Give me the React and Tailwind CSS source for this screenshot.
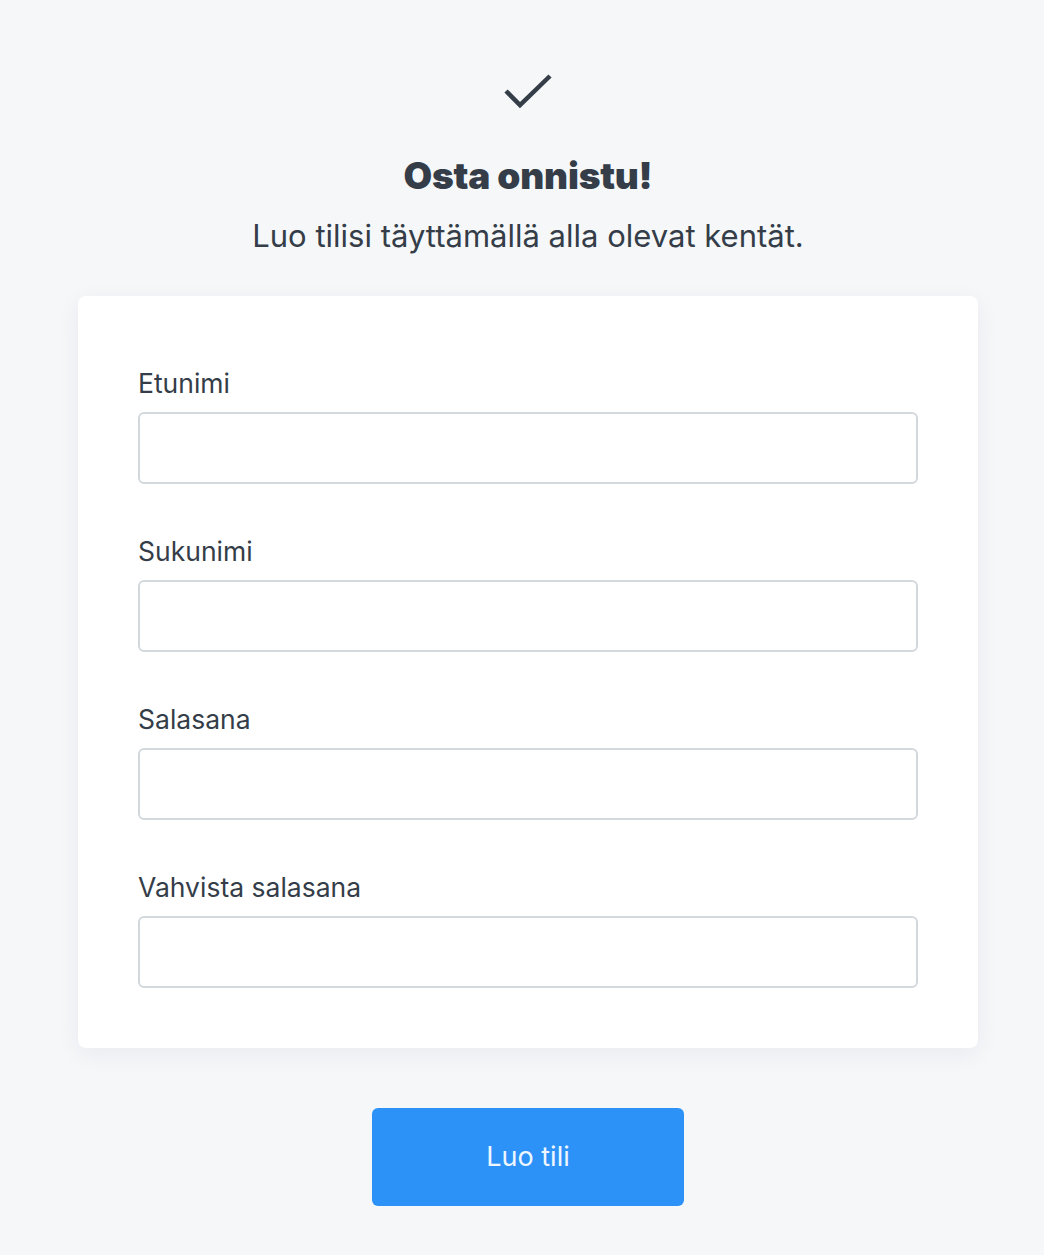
import React from 'react';

const FIELDS = ['Etunimi', 'Sukunimi', 'Salasana', 'Vahvista salasana'];

const App = () => {
    return (
        <div className="min-h-[1255px] w-full bg-[#f5f7f9] flex flex-col items-center pt-[72px] pl-3 text-[#343d48]" style={{ fontFamily: 'Inter, "Noto Sans", sans-serif' }}>
            <svg width="50" height="40" viewBox="0 0 50 40" fill="none" className="mb-[42px]">
                <path d="M3 19 L17 33 L47 4" stroke="#343d48" strokeWidth="4.5" strokeLinecap="butt" strokeLinejoin="miter" />
            </svg>

            <h1 className="text-[37px] leading-[44px] font-black tracking-[-0.2px]">Osta onnistu!</h1>
            <p className="mt-[20px] text-[31px] leading-[36px]">Luo tilisi täyttämällä alla olevat kentät.</p>

            <div className="mt-[42px] w-[900px] bg-white rounded-lg shadow-[0_6px_24px_rgba(30,40,60,0.06)] pt-[68px] pb-[60px] px-[60px] flex flex-col gap-[48px]">
                {FIELDS.map((label) => (
                    <div key={label} className="flex flex-col">
                        <label className="text-[26.5px] leading-[38px] mb-[10px]">{label}</label>
                        <input
                            type={label.toLowerCase().includes('salasana') ? 'password' : 'text'}
                            className="h-[72px] w-full rounded-md border-2 border-[#d3d8dc] bg-white px-4 text-[24px] outline-none"
                        />
                    </div>
                ))}
            </div>

            <button className="mt-[60px] w-[312px] h-[98px] rounded-md bg-[#2d92f8] text-[#eef6ff] text-[27px]">
                Luo tili
            </button>
        </div>
    );
};

export default App;
